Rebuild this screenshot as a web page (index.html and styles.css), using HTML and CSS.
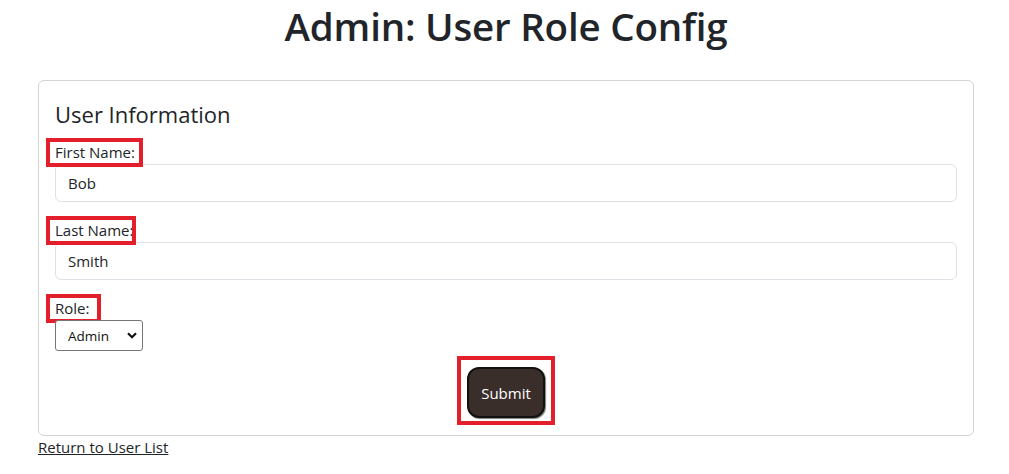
FILE: index.html
```html
<!DOCTYPE html>
<html lang="en">
<head>
<meta charset="utf-8">
<title>Admin: User Role Config</title>
<link rel="stylesheet" href="styles.css">
</head>
<body>
<main class="page">
  <h1 class="title">Admin: User Role Config</h1>
  <form class="card">
    <h4 class="card-title">User Information</h4>
    <div class="field">
      <label class="label" for="first">First Name:<span class="mark mark-first"></span></label>
      <input class="input" id="first" type="text" value="Bob">
    </div>
    <div class="field">
      <label class="label" for="last">Last Name:<span class="mark mark-last"></span></label>
      <input class="input" id="last" type="text" value="Smith">
    </div>
    <div class="field field-last">
      <label class="label" for="role">Role:<span class="mark mark-role"></span></label>
      <div class="select-wrap">
        <select class="select" id="role">
          <option>Admin</option>
          <option>User</option>
        </select>
        <svg class="chevron" width="10" height="7" viewBox="0 0 10 7"><path d="M1 1.2 L5 5.2 L9 1.2" fill="none" stroke="#111" stroke-width="2.2"/></svg>
      </div>
    </div>
    <div class="actions">
      <button class="btn" type="button">Submit<span class="mark mark-btn"></span></button>
    </div>
  </form>
  <a class="back" href="#">Return to User List</a>
</main>
</body>
</html>
```

FILE: styles.css
```css
html, body {
  margin: 0;
  padding: 0;
  background: #fff;
}
body {
  font-family: "Open Sans", "Noto Sans", sans-serif;
  color: #212529;
  font-size: 15px;
}
.page {
  padding: 0 35px 0 38px;
}
.title {
  margin: 0;
  padding-top: 1px;
  height: 79px;
  text-align: center;
  font-size: 38.5px;
  font-weight: 600;
  line-height: 50px;
  letter-spacing: -0.2px;
}
.card {
  border: 1px solid #d4d4d4;
  border-radius: 6px;
  padding: 18px 16px 17px;
}
.card-title {
  margin: 0 0 12px;
  font-size: 22px;
  font-weight: 400;
  line-height: 30px;
}
.field {
  margin-bottom: 17px;
}
.field-last {
  margin-bottom: 16px;
}
.label {
  position: relative;
  display: inline-block;
  line-height: 23px;
  height: 23px;
}
.mark {
  position: absolute;
  left: -9px;
  top: -3px;
  height: 21px;
  border: 4px solid #e21f2b;
  pointer-events: none;
}
.mark-first { width: 89px; }
.mark-last { width: 82px; }
.mark-role { width: 47px; }
.input {
  display: block;
  box-sizing: border-box;
  width: 100%;
  height: 38px;
  border: 1px solid #dee2e6;
  border-radius: 6px;
  padding: 0 12px;
  font-family: inherit;
  font-size: 15px;
  color: #212529;
  background: #fff;
}
.select-wrap {
  position: relative;
  width: 88px;
  height: 31px;
}
.select {
  appearance: none;
  -webkit-appearance: none;
  box-sizing: border-box;
  width: 88px;
  height: 31px;
  border: 1px solid #767676;
  border-radius: 3px;
  padding: 0 0 0 12px;
  font-family: inherit;
  font-size: 13.5px;
  color: #111;
  background: #fff;
}
.chevron {
  position: absolute;
  right: 6px;
  top: 12px;
  pointer-events: none;
}
.actions {
  display: flex;
  justify-content: center;
}
.btn {
  position: relative;
  box-sizing: border-box;
  width: 78px;
  height: 51px;
  border: 2px solid #111;
  border-radius: 12px;
  background: #3a2e2a;
  color: #fff;
  font-family: inherit;
  font-size: 15px;
  box-shadow: 1px 1px 1px rgba(0,0,0,.5);
}
.mark-btn {
  left: -12px;
  top: -13px;
  width: 90px;
  height: 61px;
}
.back {
  display: inline-block;
  margin-top: 0;
  color: #212529;
  font-size: 15px;
  line-height: 22px;
}
```
